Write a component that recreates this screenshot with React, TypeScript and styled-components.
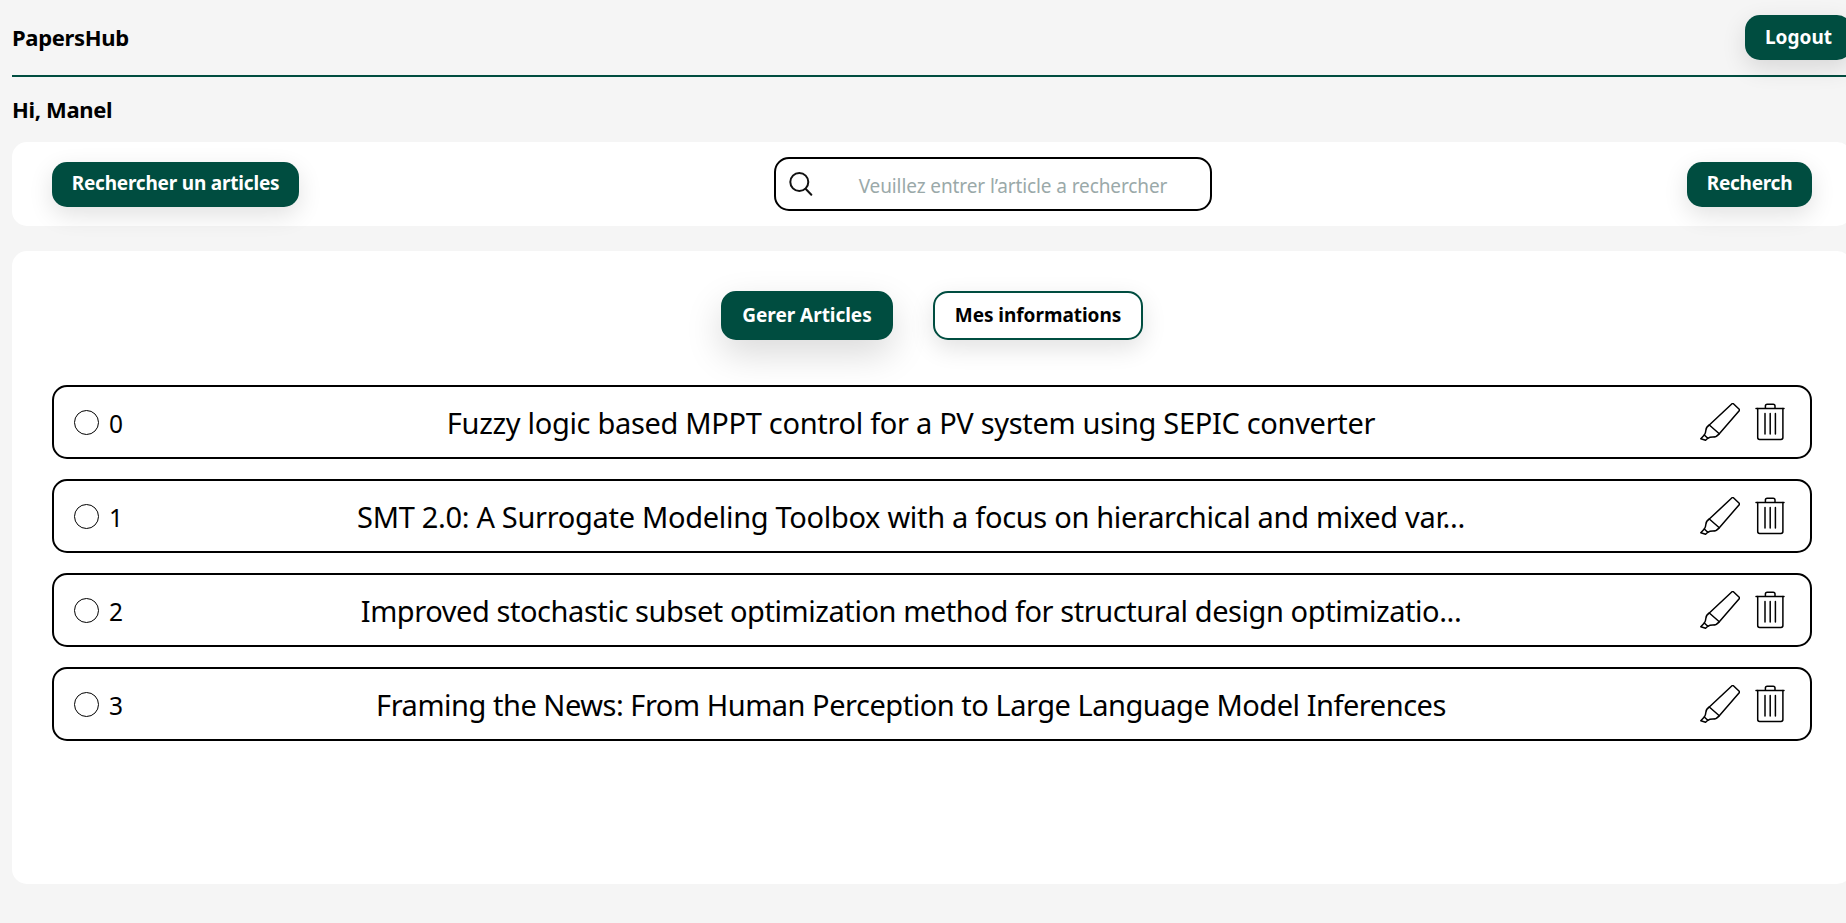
import React from "react";
import styled, { createGlobalStyle, css } from "styled-components";

const green = "#004d40";

const GlobalStyle = createGlobalStyle`
  *, *::before, *::after { box-sizing: border-box; }
  html, body { margin: 0; height: 100%; overflow: hidden; background: #f5f5f5; }
  body { font-family: "Noto Sans", sans-serif; color: #000; }
`;

const Page = styled.div`
  width: 1852px;
  height: 923px;
  padding-left: 12px;
  display: flex;
  flex-direction: column;
`;

const Header = styled.header`
  height: 77px;
  padding-top: 15px;
  border-bottom: 2px solid ${green};
  display: flex;
  align-items: flex-start;
  justify-content: space-between;
`;

const Heading = styled.h1`
  margin: 0;
  font-size: 22px;
  line-height: 44px;
  font-weight: 700;
  white-space: nowrap;
  letter-spacing: -0.33px;
`;

const Greeting = styled(Heading).attrs({ as: "h2" })`
  margin: 10px 0 11px;
`;

const Button = styled.button<{ $width: number; $spacing?: number }>`
  width: ${(p) => p.$width}px;
  height: 45px;
  padding: 0 0 2px;
  border: 0;
  border-radius: 15px;
  background: ${green};
  color: #fff;
  font: 700 19px/26px "Noto Sans", sans-serif;
  letter-spacing: ${(p) => p.$spacing ?? 0}px;
  white-space: nowrap;
  box-shadow: 0 8px 24px rgba(0, 0, 0, 0.12);
`;

const Tab = styled(Button)<{ $active?: boolean }>`
  height: 49px;
  border: 2px solid ${green};
  ${(p) =>
    p.$active
      ? css`box-shadow: 0 14px 36px rgba(0, 0, 0, 0.15);`
      : css`
          background: #fff;
          color: #000;
        `}
`;

const SearchPanel = styled.section`
  height: 84px;
  flex: none;
  padding: 0 40px;
  border-radius: 15px;
  background: #fff;
  display: grid;
  grid-template-columns: 247px 438px 125px;
  justify-content: space-between;
  align-items: center;
`;

const SearchBox = styled.label`
  height: 54px;
  border: 2px solid #000;
  border-radius: 15px;
  display: flex;
  align-items: center;
  padding-left: 13px;
`;

const SearchInput = styled.input`
  flex: 1;
  min-width: 0;
  height: 46px;
  border: 0;
  padding: 4px 0 0 3px;
  outline: 0;
  background: transparent;
  text-align: center;
  font: 400 19px "Noto Sans", sans-serif;
  letter-spacing: -0.1px;
  &::placeholder { color: #9aa9a9; opacity: 1; }
`;

const Content = styled.main`
  height: 633px;
  flex: none;
  margin-top: 25px;
  padding: 40px;
  border-radius: 15px;
  background: #fff;
`;

const Tabs = styled.nav`
  display: flex;
  justify-content: center;
  gap: 40px;
  margin-bottom: 45px;
`;

const List = styled.div`
  display: flex;
  flex-direction: column;
  gap: 20px;
`;

const Row = styled.article`
  height: 74px;
  border: 2px solid #000;
  border-radius: 15px;
  padding: 0 25px 0 20px;
  display: grid;
  grid-template-columns: 70px 1fr 107px;
  align-items: center;
`;

const Index = styled.div`
  display: flex;
  align-items: center;
  gap: 10px;
  padding-top: 3px;
  font-size: 24.5px;
  line-height: 34px;
`;

const Circle = styled.span`
  width: 25px;
  height: 25px;
  margin-top: -3px;
  border: 1.3px solid #000;
  border-radius: 50%;
`;

const Title = styled.div<{ $spacing: number }>`
  text-align: center;
  font-size: 29px;
  line-height: 40px;
  padding-top: 1px;
  white-space: nowrap;
  letter-spacing: ${(p) => p.$spacing}px;
`;

const Actions = styled.div`
  display: flex;
  justify-content: flex-end;
  gap: 15px;
`;

const SearchIcon = () => (
  <svg width="24" height="24" viewBox="0 0 24 24" fill="none" stroke="#111" strokeWidth="2" strokeLinecap="round">
    <circle cx="10.3" cy="10" r="9" />
    <path d="M16.8 17 22.3 22.7" />
  </svg>
);

const MarkerIcon = () => (
  <svg width="40" height="38" viewBox="0 0 40 38" fill="none" stroke="#000" strokeWidth="1.5" strokeLinejoin="round" strokeLinecap="round">
    <path d="M32 .8Q32.7.2 33.4.8L39.2 6.3Q39.8 7 39.2 7.7L19.3 30.7 9.3 22Z" />
    <path d="M9.3 22C3.8 25.2 7.5 27.5 4.3 32L7.8 35.3C12.5 32.5 15 36.3 19.3 30.7" />
    <path d="M4.3 32 .8 35.8 5.6 37.2 7.8 35.3" />
  </svg>
);

const TrashIcon = () => (
  <svg width="30" height="38" viewBox="0 0 30 38" fill="none" stroke="#000" strokeWidth="1.5" strokeLinejoin="round" strokeLinecap="round">
    <path d="M1 5.4H29M10.4 5.2V3Q10.4 1.2 12.2 1.2H18.2Q20 1.2 20 3V5.2" />
    <path d="M2.7 5.5V34.5Q2.7 36.4 4.6 36.4H26Q27.9 36.4 27.9 34.5V5.5M10 10.5V31M15.2 10.5V31M20.4 10.5V31" />
  </svg>
);

const articles = [
  { title: "Fuzzy logic based MPPT control for a PV system using SEPIC converter", spacing: -0.31 },
  { title: "SMT 2.0: A Surrogate Modeling Toolbox with a focus on hierarchical and mixed var...", spacing: -0.31 },
  { title: "Improved stochastic subset optimization method for structural design optimizatio...", spacing: -0.43 },
  { title: "Framing the News: From Human Perception to Large Language Model Inferences", spacing: -0.47 },
];

export default function App() {
  return (
    <Page>
      <GlobalStyle />
      <Header>
        <Heading>PapersHub</Heading>
        <Button $width={107}>Logout</Button>
      </Header>
      <Greeting>Hi, Manel</Greeting>
      <SearchPanel>
        <Button $width={247} $spacing={-0.2}>Rechercher un articles</Button>
        <SearchBox>
          <SearchIcon />
          <SearchInput placeholder="Veuillez entrer l’article a rechercher" />
        </SearchBox>
        <Button $width={125} $spacing={-0.25}>Recherch</Button>
      </SearchPanel>
      <Content>
        <Tabs>
          <Tab $width={172} $spacing={-0.04}  $active>Gerer Articles</Tab>
          <Tab $width={210} $spacing={-0.04}>Mes informations</Tab>
        </Tabs>
        <List>
          {articles.map((a, i) => (
            <Row key={i}>
              <Index>
                <Circle />
                {i}
              </Index>
              <Title $spacing={a.spacing}>{a.title}</Title>
              <Actions>
                <MarkerIcon />
                <TrashIcon />
              </Actions>
            </Row>
          ))}
        </List>
      </Content>
    </Page>
  );
}
